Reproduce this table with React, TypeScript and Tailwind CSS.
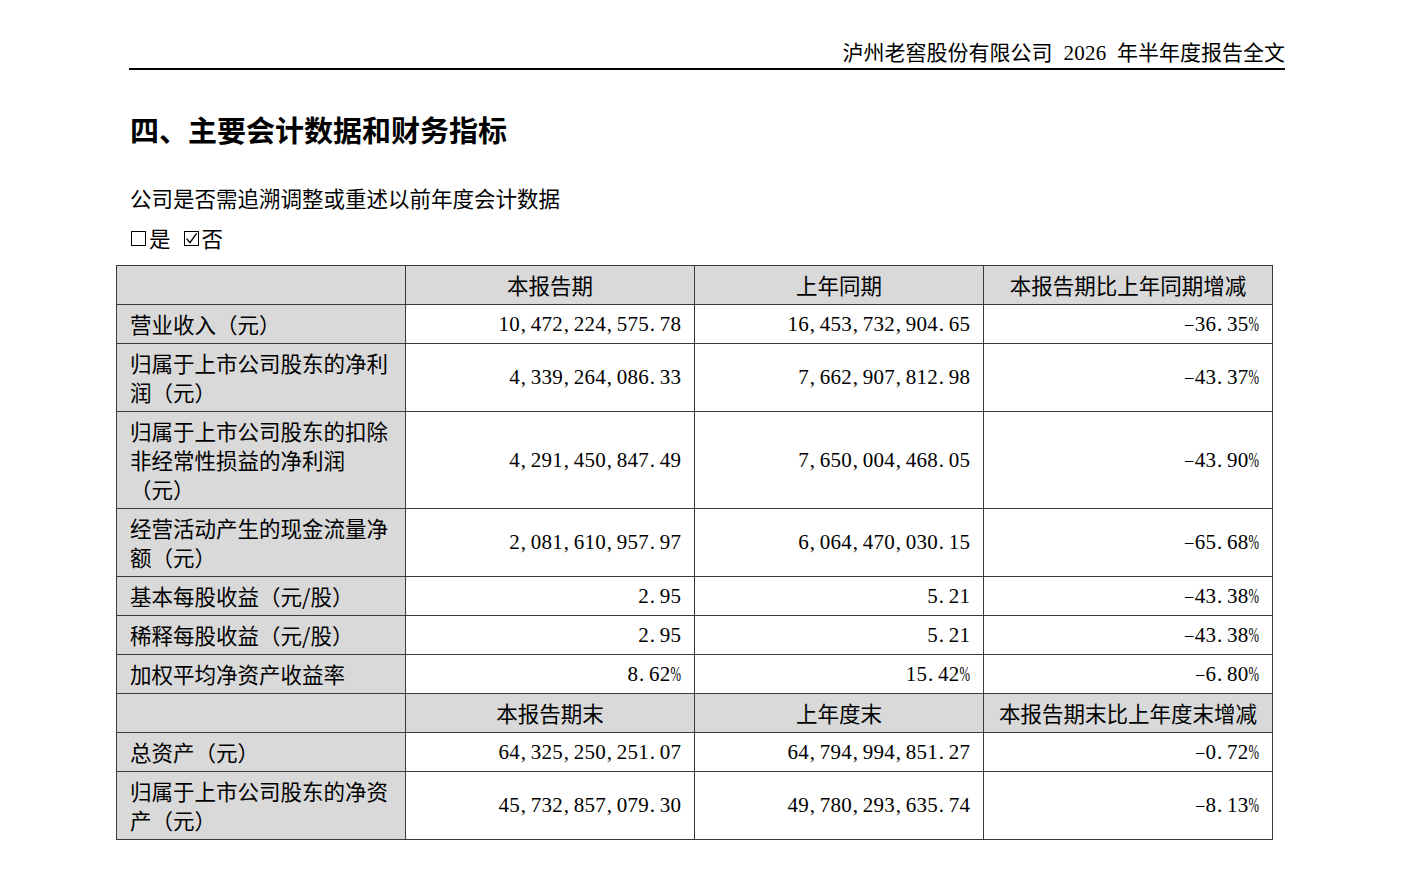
import React from 'react';

// SimSun-like half-width figures: every character sits in a fixed 0.5em cell
const Num: React.FC<{ value: string }> = ({ value }) => (
  <span className="whitespace-nowrap font-['Liberation_Serif',serif] text-[21px]">
    {value.split('').map((ch, i) => {
      if (ch === ',' || ch === '.') {
        return (
          <span key={i} className="inline-block w-[10.75px] pl-[1px] text-left">
            {ch}
          </span>
        );
      }
      if (ch === '%') {
        return (
          <span key={i} className="inline-flex w-[10.75px] justify-center">
            <span className="inline-block scale-x-60">%</span>
          </span>
        );
      }
      if (ch === '-') {
        return (
          <span key={i} className="inline-flex w-[10.75px] justify-center">
            <span className="inline-block scale-x-80">–</span>
          </span>
        );
      }
      if (ch === ' ') {
        return <span key={i} className="inline-block w-[10.75px]" />;
      }
      return (
        <span key={i} className="inline-block w-[10.75px] text-center">
          {ch}
        </span>
      );
    })}
  </span>
);

const periodRows = [
  ['营业收入（元）', '10,472,224,575.78', '16,453,732,904.65', '-36.35%'],
  ['归属于上市公司股东的净利润（元）', '4,339,264,086.33', '7,662,907,812.98', '-43.37%'],
  ['归属于上市公司股东的扣除非经常性损益的净利润（元）', '4,291,450,847.49', '7,650,004,468.05', '-43.90%'],
  ['经营活动产生的现金流量净额（元）', '2,081,610,957.97', '6,064,470,030.15', '-65.68%'],
  ['基本每股收益（元/股）', '2.95', '5.21', '-43.38%'],
  ['稀释每股收益（元/股）', '2.95', '5.21', '-43.38%'],
  ['加权平均净资产收益率', '8.62%', '15.42%', '-6.80%'],
];

const balanceRows = [
  ['总资产（元）', '64,325,250,251.07', '64,794,994,851.27', '-0.72%'],
  ['归属于上市公司股东的净资产（元）', '45,732,857,079.30', '49,780,293,635.74', '-8.13%'],
];

const cell = 'border border-[#3a3a3a] px-[13px] py-[4.5px] align-middle leading-[29px]';
const textCell = 'border border-[#3a3a3a] px-[13px] pt-[3.5px] pb-[5.5px] align-middle leading-[29px]';

const HeaderRow: React.FC<{ labels: string[] }> = ({ labels }) => (
  <tr className="bg-[#d9d9d9]">
    <td className={textCell} />
    {labels.map(l => (
      <td key={l} className={`${textCell} text-center`}>
        {l}
      </td>
    ))}
  </tr>
);

const DataRow: React.FC<{ row: string[] }> = ({ row }) => (
  <tr>
    <td className={`${textCell} bg-[#d9d9d9] text-left`}>{row[0]}</td>
    {row.slice(1).map((v, i) => (
      <td key={i} className={`${cell} text-right font-['Liberation_Serif',serif] text-[21px]`}>
        <Num value={v} />
      </td>
    ))}
  </tr>
);

const CheckBox: React.FC<{ checked?: boolean }> = ({ checked }) => (
  <span className="inline-flex h-[15px] w-[15px] items-center justify-center border border-black">
    {checked && (
      <svg width="13" height="13" viewBox="0 0 13 13" fill="none">
        <path d="M1.6 6.6 L5 10.6 L11.6 1.4" stroke="#000" strokeWidth="1.4" />
      </svg>
    )}
  </span>
);

export default function App() {
  return (
    <div className="min-h-[869px] w-[1404px] bg-white text-black font-['Noto_Sans_CJK_SC',sans-serif] [text-spacing-trim:space-all]">
      <div className="ml-[129px] w-[1156px] border-b-2 border-black pt-[36px] text-right text-[21px] leading-[30px]">
        泸州老窖股份有限公司
        <Num value=" 2026 " />
        年半年度报告全文
      </div>

      <h1 className="ml-[130px] mt-[39px] text-[29px] font-bold leading-[40px]">四、主要会计数据和财务指标</h1>

      <p className="ml-[130px] mt-[34px] text-[21.5px] leading-[30px]">公司是否需追溯调整或重述以前年度会计数据</p>

      <div className="ml-[131px] mt-[10px] flex h-[30px] items-center text-[21.5px]">
        <CheckBox />
        <span className="ml-[3px]">是</span>
        <span className="ml-[13px] flex">
          <CheckBox checked />
        </span>
        <span className="ml-[3px]">否</span>
      </div>

      <table className="ml-[116px] mt-[12px] w-[1157px] table-fixed border-collapse text-[21.5px]">
        <colgroup>
          <col className="w-1/4" />
          <col className="w-1/4" />
          <col className="w-1/4" />
          <col className="w-1/4" />
        </colgroup>
        <tbody>
          <HeaderRow labels={['本报告期', '上年同期', '本报告期比上年同期增减']} />
          {periodRows.map(r => (
            <DataRow key={r[0]} row={r} />
          ))}
          <HeaderRow labels={['本报告期末', '上年度末', '本报告期末比上年度末增减']} />
          {balanceRows.map(r => (
            <DataRow key={r[0]} row={r} />
          ))}
        </tbody>
      </table>
    </div>
  );
}
